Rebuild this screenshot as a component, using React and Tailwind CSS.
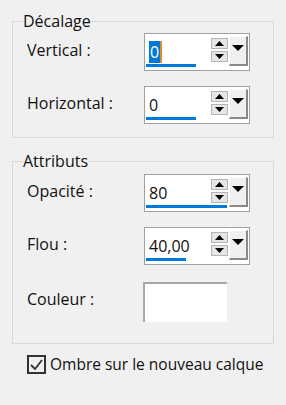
import React from 'react';

const font = { fontFamily: '"Open Sans", "Liberation Sans", sans-serif' };

function Tri({ dir = 'up' }) {
    return (
        <svg width="9" height="5" viewBox="0 0 9 5">
            {dir === 'up'
                ? <polygon points="0,5 9,5 4.5,0" fill="#000" />
                : <polygon points="0,0 9,0 4.5,5" fill="#000" />}
        </svg>
    );
}

function SpinBox({ value, bar, selected }) {
    return (
        <div className="flex h-[38px] w-[106px] border border-[#a0a0a0] bg-white">
            <div className="flex w-[66px] shrink-0 flex-col pl-[4px]">
                <div className="flex h-[29px] items-end text-[16px] leading-[22px] text-[#111]">
                    {selected
                        ? <span className="border-r-2 border-[#e08a2a] bg-[#0078d7] px-[1px] text-white">{value}</span>
                        : <span>{value}</span>}
                </div>
                <div className="mt-auto mb-[3px] -ml-[3px] h-[3px] shrink-0 bg-[#0078d7]" style={{ width: bar }} />
            </div>
            <div className="flex flex-col gap-[2px] pt-[4px]">
                <div className="flex h-[11px] w-[17px] items-center justify-center border border-[#b5b5b5] bg-[#e6e6e6]">
                    <Tri dir="up" />
                </div>
                <div className="flex h-[11px] w-[17px] items-center justify-center border border-[#b5b5b5] bg-[#e6e6e6]">
                    <Tri dir="down" />
                </div>
            </div>
            <div className="mx-[1px] mt-[2px] mb-[4px] flex w-[19px] justify-center border-l border-t border-r-2 border-b-2 border-l-white border-t-white border-r-[#8a8a8a] border-b-[#8a8a8a] bg-[#f0f0f0] pt-[8px]">
                <svg width="12" height="6" viewBox="0 0 12 6">
                    <polygon points="0,0 12,0 6,6" fill="#000" />
                </svg>
            </div>
        </div>
    );
}

function Row({ label, children, className = '' }) {
    return (
        <div className={`flex items-start ${className}`}>
            <div className="w-[117px] pt-[6px] text-[16px] leading-[22px] text-[#111]">{label}</div>
            {children}
        </div>
    );
}

export default function App() {
    return (
        <div className="h-[405px] w-[286px] bg-[#f0f0f0] pt-[11px]" style={font}>
            <fieldset className="ml-[12px] w-[262px] border border-[#d9d9d9] pl-[10px] pb-[13px]">
                <legend className="text-[16px] leading-[20px] text-[#111]">Décalage</legend>
                <div className="flex flex-col gap-[15px] pl-[4px] pt-[2px]">
                    <Row label="Vertical :">
                        <SpinBox value="0" bar={50} selected />
                    </Row>
                    <Row label="Horizontal :">
                        <SpinBox value="0" bar={50} />
                    </Row>
                </div>
            </fieldset>

            <fieldset className="ml-[12px] mt-[13px] w-[262px] border border-[#d9d9d9] pl-[10px] pb-[21px]">
                <legend className="text-[16px] leading-[20px] text-[#111]">Attributs</legend>
                <div className="flex flex-col gap-[15px] pl-[4px] pt-[3px]">
                    <Row label="Opacité :">
                        <SpinBox value="80" bar={81} />
                    </Row>
                    <Row label="Flou :">
                        <SpinBox value="40,00" bar={40} />
                    </Row>
                    <Row label="Couleur :" className="mt-[2px]">
                        <div className="-ml-[1px] h-[40px] w-[84px] border-l-2 border-t-2 border-[#a8a8a8] bg-white" />
                    </Row>
                </div>
            </fieldset>

            <label className="ml-[27px] mt-[9px] flex items-center gap-[4px] text-[15.5px] leading-[22px] text-[#111]">
                <span className="flex h-[19px] w-[19px] items-center justify-center border-2 border-[#333]">
                    <svg width="13" height="11" viewBox="0 0 13 11">
                        <polyline points="1,6 5,10 12,1" fill="none" stroke="#333" strokeWidth="1.8" />
                    </svg>
                </span>
                <span>Ombre sur le nouveau calque</span>
            </label>
        </div>
    );
}
